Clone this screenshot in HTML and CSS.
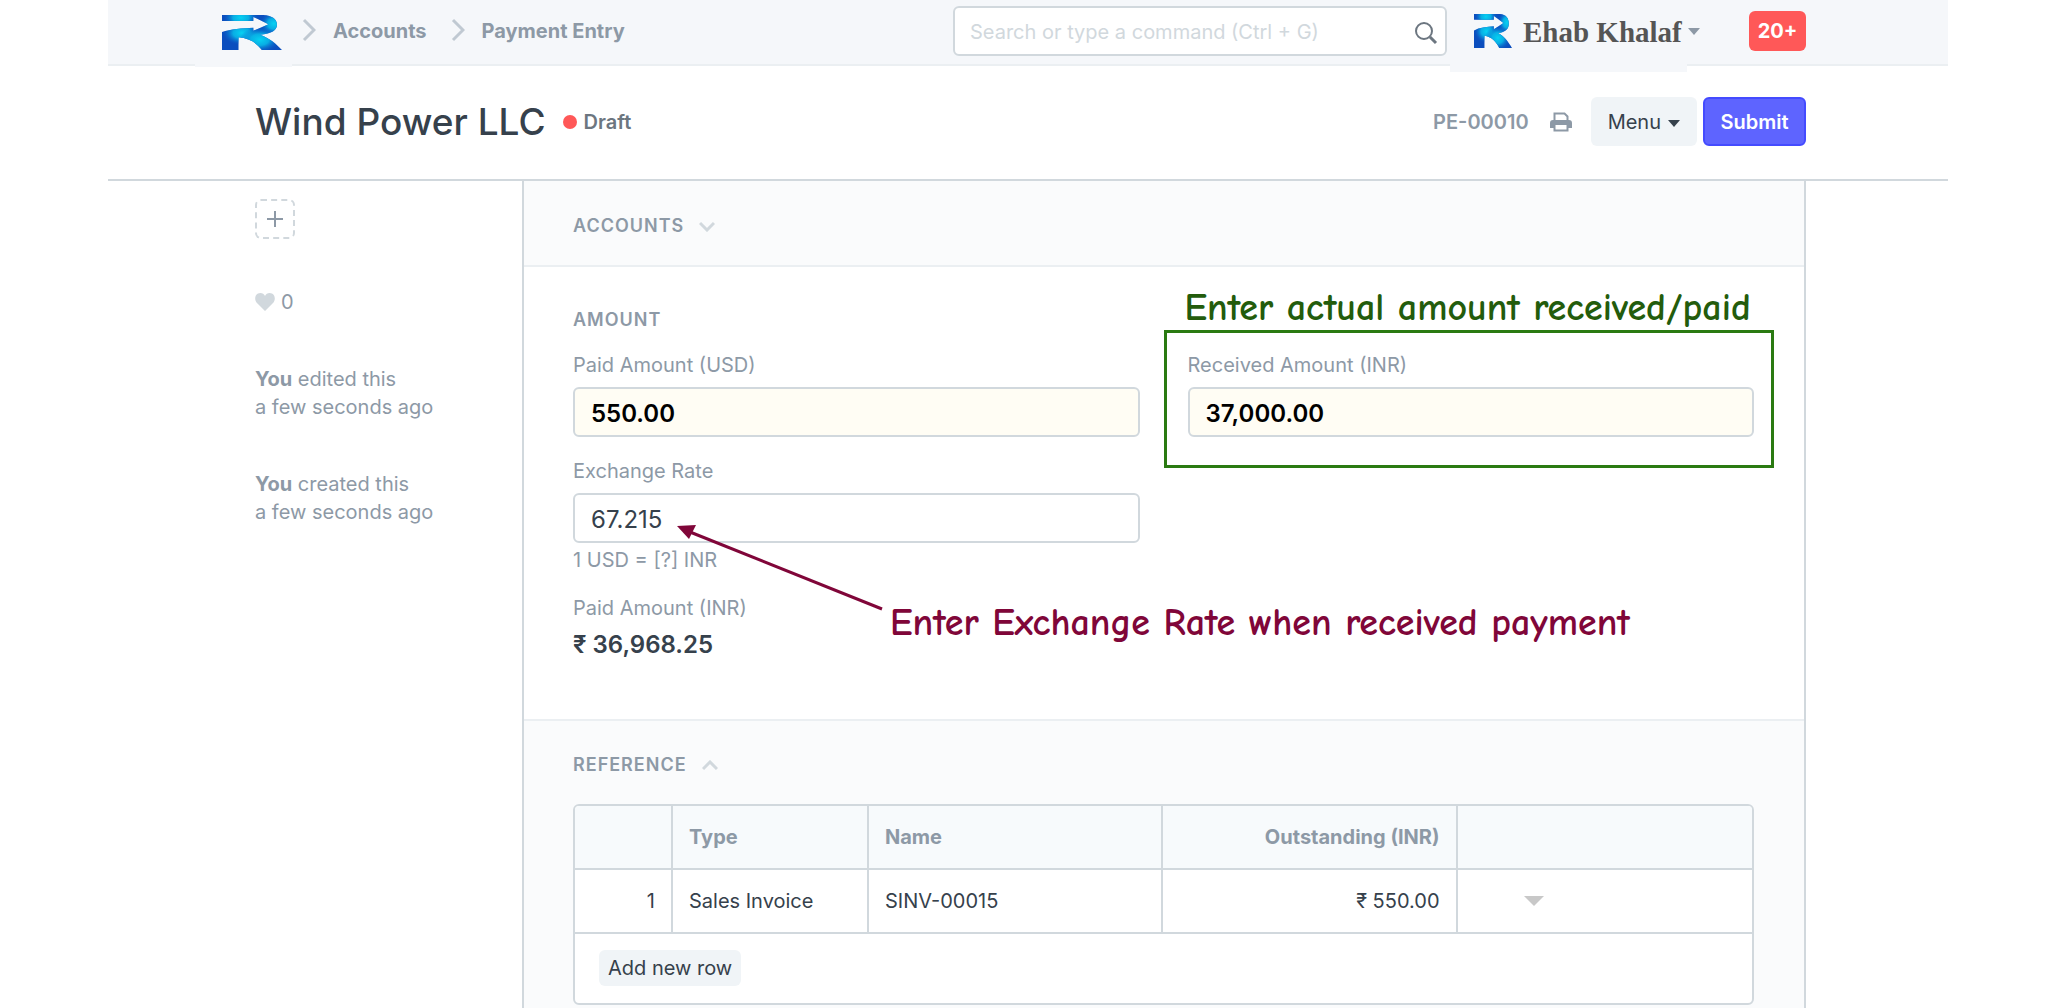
FILE: index.html
```html
<!DOCTYPE html>
<html lang="en">
<head>
<meta charset="utf-8">
<meta name="viewport" content="width=device-width, initial-scale=1">
<title>Wind Power LLC - Payment Entry</title>
<link rel="stylesheet" href="styles.css">
</head>
<body>
<svg class="sprite" aria-hidden="true">
  <defs>
    <radialGradient id="glow"><stop offset="0" stop-color="#06d2f2"/><stop offset="0.45" stop-color="#08b8e8" stop-opacity="0.9"/><stop offset="1" stop-color="#0b62cc" stop-opacity="0"/></radialGradient>
    <clipPath id="r-shape"><path d="M0 0H122C150 1 163 14 163 29C163 46 148 55 112 59C142 69 160 86 178 105H118C103 84 82 70 49 67V105H0V51C25 42 60 39 93 38V47L138 28L93 6V18H0Z"/></clipPath>
    <symbol id="logo" viewBox="0 0 178 105" preserveAspectRatio="none">
      <g clip-path="url(#r-shape)">
        <rect width="178" height="105" fill="#0b4ebe"/>
        <ellipse cx="56" cy="8" rx="52" ry="32" fill="url(#glow)"/>
        <ellipse cx="154" cy="26" rx="42" ry="36" fill="url(#glow)"/>
        <ellipse cx="58" cy="54" rx="56" ry="36" fill="url(#glow)"/>
        <ellipse cx="112" cy="74" rx="60" ry="38" fill="url(#glow)"/>
      </g>
    </symbol>
  </defs>
</svg>
<div class="app">
  <header class="navbar">
    <nav class="crumbs" aria-label="Breadcrumb">
      <a class="brand" href="#" aria-label="Home"><svg class="brand-logo"><use href="#logo"/></svg></a>
      <svg class="crumb-sep" viewBox="0 0 14 24"><path d="M2 2L12 12L2 22"/></svg>
      <a class="crumb" href="#">Accounts</a>
      <svg class="crumb-sep" viewBox="0 0 14 24"><path d="M2 2L12 12L2 22"/></svg>
      <a class="crumb" href="#">Payment Entry</a>
    </nav>
    <div class="search">
      <input class="search-input" type="text" aria-label="Search" placeholder="Search or type a command (Ctrl + G)">
      <svg class="search-icon" viewBox="0 0 24 24"><circle cx="10" cy="10" r="8"/><path class="handle" d="M16 16L22 22"/></svg>
    </div>
    <a class="user" href="#"><svg class="user-logo"><use href="#logo"/></svg><span>Ehab Khalaf</span></a>
    <svg class="user-caret" viewBox="0 0 12 7"><path d="M0 0H12L6 7Z"/></svg>
    <button class="badge" type="button">20+</button>
  </header>

  <div class="page-head">
    <h1 class="title">Wind Power LLC</h1>
    <span class="status">Draft</span>
    <span class="doc-id">PE-00010</span>
    <button class="print" type="button" aria-label="Print"><svg viewBox="0 0 22 20"><path class="paper" d="M4.500 9V1.500H14.500L17.500 4.500V9"/><path class="body" d="M3 8H19Q22 8 22 11V16H18V13H4V16H0V11Q0 8 3 8Z"/><path class="paper" d="M4.500 13V18.500H17.500V13"/></svg></button>
    <button class="btn menu" type="button">Menu <svg class="menu-caret" viewBox="0 0 12 7"><path d="M0 0H12L6 7Z"/></svg></button>
    <button class="btn submit" type="button">Submit</button>
  </div>

  <div class="page-body">
    <aside class="side">
      <button class="add" type="button" aria-label="Assign"><svg viewBox="0 0 16 16"><path d="M8 0V16M0 8H16"/></svg></button>
      <div class="likes"><svg viewBox="0 0 20 18"><path d="M10 18L1.500 9.500C-1 6.500 0 0 5.300 0C7.500 0 9.200 1.300 10 3C10.800 1.300 12.500 0 14.700 0C20 0 21 6.500 18.500 9.500Z"/></svg><span>0</span></div>
      <p class="log"><b>You</b> edited this<br>a few seconds ago</p>
      <p class="log"><b>You</b> created this<br>a few seconds ago</p>
    </aside>

    <main class="form">
      <section class="section head-only">
        <h2 class="section-title">Accounts <svg viewBox="0 0 16 11"><path d="M1 2L8 9L15 2"/></svg></h2>
      </section>

      <section class="section amount">
        <h2 class="section-title">Amount</h2>
        <div class="columns">
          <div class="column">
            <div class="field">
              <label for="paid">Paid Amount (USD)</label>
              <input class="control required" id="paid" type="text" value="550.00">
            </div>
            <div class="field">
              <label for="rate">Exchange Rate</label>
              <input class="control" id="rate" type="text" value="67.215">
              <p class="help">1 USD = [?] INR</p>
            </div>
            <div class="field">
              <span class="label">Paid Amount (INR)</span>
              <strong class="value">₹ 36,968.25</strong>
            </div>
          </div>
          <div class="column">
            <div class="field marked">
              <label for="received">Received Amount (INR)</label>
              <input class="control required" id="received" type="text" value="37,000.00">
              <span class="note note-green">Enter actual amount received/paid</span>
            </div>
          </div>
        </div>
        <svg class="arrow" viewBox="0 0 208 90"><path class="shaft" d="M14 9L206 86"/><path class="tip" d="M1 3L20 2L13 16Z"/></svg>
        <span class="note note-maroon">Enter Exchange Rate when received payment</span>
      </section>

      <section class="section reference">
        <h2 class="section-title">Reference <svg viewBox="0 0 16 11"><path d="M1 9L8 2L15 9"/></svg></h2>
        <div class="grid">
          <table>
            <colgroup><col class="c-no"><col class="c-type"><col class="c-name"><col class="c-amt"><col></colgroup>
            <thead><tr><th></th><th>Type</th><th>Name</th><th class="num">Outstanding (INR)</th><th></th></tr></thead>
            <tbody><tr><td class="num">1</td><td>Sales Invoice</td><td>SINV-00015</td><td class="num">₹ 550.00</td><td class="open"><svg viewBox="0 0 20 10"><path d="M0 0H20L10 10Z"/></svg></td></tr></tbody>
          </table>
          <div class="grid-foot"><button class="add-row" type="button">Add new row</button></div>
        </div>
      </section>
    </main>
  </div>
</div>
</body>
</html>
```
FILE: styles.css
```css
* { box-sizing: border-box; }
body {
  margin: 0;
  background: #fff;
  color: #36414c;
  font: 400 20px/28px Inter, "Liberation Sans", sans-serif;
}
button, input { font: inherit; color: inherit; margin: 0; }
button { border: 0; padding: 0; background: none; cursor: pointer; }
a { color: inherit; text-decoration: none; }
svg { display: block; flex: none; }
h1, h2, p { margin: 0; }
.sprite { position: absolute; width: 0; height: 0; }
.app { min-height: 100vh; margin: 0 104px 0 108px; display: flex; flex-direction: column; }

/* Top bar */
.navbar {
  height: 66px;
  padding: 0 142px 0 87px;
  display: flex;
  align-items: flex-start;
  background: #f5f7fa;
  border-bottom: 2px solid #ebeff2;
}
.crumbs { display: flex; align-items: flex-start; margin-right: auto; }
.brand { padding: 15px 10px 17px 27px; background: #f5f7fa; }
.brand-logo { width: 60px; height: 35px; }
.crumb-sep { width: 14px; height: 24px; margin: 18px 17px 0 24px; fill: none; stroke: #c0c9d2; stroke-width: 3; }
.brand + .crumb-sep { margin-left: 10px; }
.crumb { padding-top: 17px; font-weight: 700; color: #8d99a6; }
.search { position: relative; width: 494px; margin: 6px 3px 0 0; }
.search-input {
  width: 100%;
  height: 50px;
  padding: 1px 50px 0 15px;
  border: 2px solid #d1d8dd;
  border-radius: 6px;
  background: #fff;
}
.search-input::placeholder { color: #d1d8dd; opacity: 1; }
.search-icon { position: absolute; right: 9px; top: 15px; width: 24px; height: 24px; fill: none; stroke: #6c7680; stroke-width: 2; }
.search-icon .handle { stroke-width: 3; }
.user {
  display: flex;
  width: 237px;
  height: 72px;
  padding: 14px 0 0 24px;
  gap: 11px;
  background: #f5f7fa;
  color: #555;
  font: bold 29px/36px "Liberation Serif", serif;
  white-space: nowrap;
}
.user-logo { width: 38px; height: 34px; }
.user-caret { width: 12px; height: 7px; margin: 28px 49px 0 1px; fill: #8d99a6; }
.badge { width: 57px; height: 40px; margin-top: 11px; border-radius: 6px; background: #ff5858; color: #fff; font-weight: 700; }

/* Title bar */
.page-head {
  height: 115px;
  padding: 0 142px 2px 147px;
  display: flex;
  align-items: center;
  border-bottom: 2px solid #d1d8dd;
}
.title { font-size: 37px; line-height: 48px; font-weight: 500; }
.status { display: flex; align-items: center; gap: 7px; margin: 0 auto 0 17px; font-weight: 600; color: #6c7680; }
.status::before { content: ""; width: 14px; height: 14px; border-radius: 50%; background: #ff5858; }
.doc-id { font-weight: 600; color: #8d99a6; }
.print { margin: 0 19px 0 21px; }
.print svg { width: 22px; height: 20px; }
.print .body { fill: #8d99a6; }
.print .paper { fill: #fff; stroke: #8d99a6; stroke-width: 2; }
.btn { height: 49px; border-radius: 6px; }
.menu { display: flex; align-items: center; gap: 7px; padding: 0 17px; margin-right: 6px; background: #f0f4f7; }
.menu-caret { width: 12px; height: 7px; margin-top: 4px; fill: #36414c; }
.submit { width: 103px; border: 2px solid #444bff; background: #5e64ff; color: #fff; font-weight: 600; }

/* Body */
.page-body { flex: 1; display: flex; padding: 0 142px 0 147px; }
.side { width: 267px; flex: none; padding-top: 18px; color: #8d99a6; }
.add { width: 40px; height: 40px; display: grid; place-items: center; border: 2px dashed #d1d8dd; border-radius: 6px; }
.add svg { width: 16px; height: 16px; stroke: #8d99a6; stroke-width: 2; }
.likes { display: flex; align-items: center; gap: 6px; margin: 49px 0; }
.likes svg { width: 20px; height: 18px; fill: #d1d8dd; }
.log { margin-bottom: 49px; }

.form { flex: 1; min-width: 0; border: solid #d1d8dd; border-width: 0 2px; }
.section { padding: 0 50px 0 49px; }
.section-title {
  display: flex;
  align-items: center;
  gap: 15px;
  font-size: 18px;
  line-height: 24px;
  font-weight: 600;
  letter-spacing: 1px;
  text-transform: uppercase;
  color: #8d99a6;
}
.section-title svg { width: 16px; height: 11px; fill: none; stroke: #d1d8dd; stroke-width: 3; }
.head-only { padding-top: 33px; padding-bottom: 27px; background: #fafbfc; }
.amount { position: relative; padding-top: 41px; padding-bottom: 59px; border: solid #ebeff2; border-width: 2px 0; }
.columns { display: grid; grid-template-columns: 1fr 1fr; gap: 48px; padding-top: 19px; }
.column { display: flex; flex-direction: column; gap: 20px; }
.field { display: flex; flex-direction: column; }
.field label, .field .label { margin-bottom: 8px; color: #8d99a6; }
.control {
  width: 100%;
  height: 50px;
  padding: 2px 16px 0;
  border: 2px solid #d1d8dd;
  border-radius: 6px;
  background: #fff;
  font-size: 24px;
}
.required { background: #fffdf4; color: #000; font-weight: 600; }
.help { margin-top: 3px; color: #8d99a6; }
.value { font-size: 24px; line-height: 30px; font-weight: 600; }

/* Annotations drawn over the form */
.marked { position: relative; }
.marked::before { content: ""; position: absolute; inset: -21px -20px -31px -24px; border: 3px solid #2a7a12; pointer-events: none; }
.note { position: absolute; white-space: nowrap; font: 700 38px/40px "Chalkboard", "Comic Neue", "Noto Sans", sans-serif; }
.note-green { left: -3px; top: -63px; color: #235c0c; }
.note-maroon { left: 366px; top: 336px; color: #800639; }
.arrow { position: absolute; left: 152px; top: 256px; width: 208px; height: 90px; }
.arrow .shaft { fill: none; stroke: #800639; stroke-width: 3; }
.arrow .tip { fill: #800639; }

/* Reference grid */
.reference { padding-top: 32px; padding-bottom: 3px; background: #fafbfc; }
.grid { margin-top: 27px; border: 2px solid #d1d8dd; border-radius: 6px; background: #fff; overflow: hidden; }
table { width: 100%; table-layout: fixed; border-collapse: separate; border-spacing: 0; }
.c-no { width: 98px; }
.c-type { width: 196px; }
.c-name { width: 25%; }
.c-amt { width: 25%; }
th, td { height: 64px; padding: 0 16px; border: solid #d1d8dd; border-width: 0 2px 2px 0; text-align: left; }
th { background: #f7fafc; color: #8d99a6; font-weight: 700; }
th:last-child, td:last-child { border-right: 0; }
.num { text-align: right; }
td.open { padding-left: 66px; }
.open svg { width: 20px; height: 10px; fill: #c8c8c8; }
.grid-foot { padding: 16px 24px 17px; }
.add-row { display: block; height: 36px; padding: 0 9px; border-radius: 6px; background: #f0f4f7; }
```
